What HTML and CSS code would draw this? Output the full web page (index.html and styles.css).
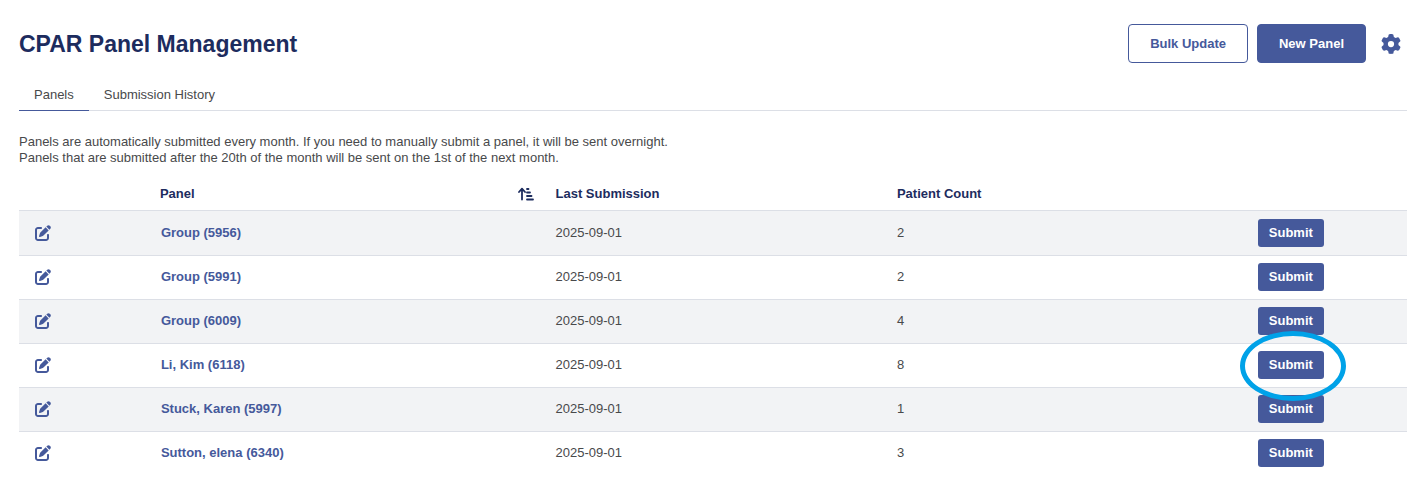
FILE: index.html
```html
<!DOCTYPE html>
<html lang="en">
<head>
<meta charset="utf-8">
<title>CPAR Panel Management</title>
<link rel="stylesheet" href="styles.css">
</head>
<body>
<svg class="sprite" aria-hidden="true">
  <symbol id="edit" viewBox="0 0 512 512"><path d="M471.600 21.700c-21.900-21.900-57.300-21.900-79.200 0L362.300 51.700l97.900 97.900 30.100-30.100c21.900-21.900 21.900-57.300 0-79.200L471.600 21.700zm-299.200 220c-6.100 6.100-10.800 13.600-13.500 21.900l-29.600 88.800c-2.900 8.600-.6 18.100 5.800 24.600s15.900 8.700 24.600 5.800l88.800-29.600c8.200-2.700 15.700-7.400 21.900-13.500L437.700 172.300 339.700 74.300 172.400 241.700zM96 64C43 64 0 107 0 160V416c0 53 43 96 96 96H352c53 0 96-43 96-96V320c0-17.700-14.300-32-32-32s-32 14.300-32 32v96c0 17.700-14.300 32-32 32H96c-17.700 0-32-14.300-32-32V160c0-17.700 14.300-32 32-32h96c17.700 0 32-14.300 32-32s-14.300-32-32-32H96z"/></symbol>
</svg>
<main class="page">
  <header class="header">
    <h1 class="title">CPAR Panel Management</h1>
    <div class="actions">
      <button class="button button-outline" type="button">Bulk Update</button>
      <button class="button" type="button">New Panel</button>
      <button class="icon-button settings" type="button" aria-label="Settings">
        <svg class="gear" viewBox="0 0 512 512"><path d="M495.900 166.600c3.200 8.700 .5 18.400-6.400 24.600l-43.300 39.400c1.100 8.300 1.700 16.800 1.700 25.400s-.6 17.100-1.700 25.400l43.300 39.400c6.900 6.200 9.600 15.900 6.400 24.600c-4.400 11.900-9.700 23.300-15.800 34.300l-4.700 8.100c-6.600 11-14 21.400-22.100 31.200c-5.900 7.200-15.700 9.600-24.500 6.800l-55.700-17.700c-13.400 10.300-28.200 18.900-44 25.400l-12.500 57.100c-2 9.100-9 16.300-18.200 17.800c-13.800 2.300-28 3.500-42.500 3.500s-28.700-1.200-42.500-3.500c-9.200-1.500-16.200-8.700-18.200-17.800l-12.500-57.100c-15.800-6.500-30.600-15.100-44-25.400L83.100 425.900c-8.800 2.800-18.600 .3-24.500-6.800c-8.100-9.800-15.500-20.200-22.100-31.200l-4.700-8.100c-6.100-11-11.400-22.400-15.800-34.300c-3.200-8.700-.5-18.400 6.400-24.600l43.300-39.400C64.600 273.100 64 264.600 64 256s.6-17.100 1.700-25.400L22.400 191.200c-6.900-6.200-9.600-15.900-6.400-24.600c4.400-11.900 9.700-23.300 15.800-34.300l4.700-8.100c6.600-11 14-21.400 22.100-31.200c5.900-7.200 15.700-9.600 24.500-6.800l55.700 17.700c13.400-10.300 28.200-18.900 44-25.400l12.500-57.100c2-9.100 9-16.300 18.200-17.800C227.300 1.200 241.500 0 256 0s28.700 1.200 42.500 3.500c9.200 1.500 16.200 8.700 18.200 17.800l12.500 57.100c15.800 6.500 30.600 15.100 44 25.400l55.700-17.700c8.800-2.800 18.600-.3 24.500 6.800c8.100 9.800 15.500 20.200 22.100 31.200l4.700 8.100c6.100 11 11.400 22.400 15.800 34.300zM256 336a80 80 0 1 0 0-160 80 80 0 1 0 0 160z"/></svg>
      </button>
    </div>
  </header>
  <nav class="tabs">
    <a class="tab tab-active" href="#panels">Panels</a>
    <a class="tab" href="#history">Submission History</a>
  </nav>
  <p class="note">Panels are automatically submitted every month. If you need to manually submit a panel, it will be sent overnight.<br>Panels that are submitted after the 20th of the month will be sent on the 1st of the next month.</p>
  <table class="table">
    <colgroup><col class="col-edit"><col class="col-panel"><col class="col-date"><col class="col-count"><col></colgroup>
    <thead>
      <tr>
        <th></th>
        <th class="sortable"><div class="sort-head"><span>Panel</span><svg class="sort" viewBox="0 0 16 14"><path d="M4 12.500V2M1 5l3-3.300L7 5M9 2h1.500M9 5.500h3M9 9h4.500M9 12.500h6"/></svg></div></th>
        <th>Last Submission</th>
        <th>Patient Count</th>
        <th></th>
      </tr>
    </thead>
    <tbody>
      <tr>
        <td><button class="icon-button" type="button" aria-label="Edit Group (5956)"><svg class="edit"><use href="#edit"/></svg></button></td>
        <td><a class="link" href="#5956">Group (5956)</a></td><td>2025-09-01</td><td>2</td>
        <td><button class="submit" type="button">Submit</button></td>
      </tr>
      <tr>
        <td><button class="icon-button" type="button" aria-label="Edit Group (5991)"><svg class="edit"><use href="#edit"/></svg></button></td>
        <td><a class="link" href="#5991">Group (5991)</a></td><td>2025-09-01</td><td>2</td>
        <td><button class="submit" type="button">Submit</button></td>
      </tr>
      <tr>
        <td><button class="icon-button" type="button" aria-label="Edit Group (6009)"><svg class="edit"><use href="#edit"/></svg></button></td>
        <td><a class="link" href="#6009">Group (6009)</a></td><td>2025-09-01</td><td>4</td>
        <td><button class="submit" type="button">Submit</button></td>
      </tr>
      <tr>
        <td><button class="icon-button" type="button" aria-label="Edit Li, Kim (6118)"><svg class="edit"><use href="#edit"/></svg></button></td>
        <td><a class="link" href="#6118">Li, Kim (6118)</a></td><td>2025-09-01</td><td>8</td>
        <td><div class="marked"><button class="submit" type="button">Submit</button><span class="ring"></span></div></td>
      </tr>
      <tr>
        <td><button class="icon-button" type="button" aria-label="Edit Stuck, Karen (5997)"><svg class="edit"><use href="#edit"/></svg></button></td>
        <td><a class="link" href="#5997">Stuck, Karen (5997)</a></td><td>2025-09-01</td><td>1</td>
        <td><button class="submit" type="button">Submit</button></td>
      </tr>
      <tr>
        <td><button class="icon-button" type="button" aria-label="Edit Sutton, elena (6340)"><svg class="edit"><use href="#edit"/></svg></button></td>
        <td><a class="link" href="#6340">Sutton, elena (6340)</a></td><td>2025-09-01</td><td>3</td>
        <td><button class="submit" type="button">Submit</button></td>
      </tr>
    </tbody>
  </table>
</main>
</body>
</html>
```
FILE: styles.css
```css
:root {
  --blue: #45599b;
  --navy: #1d2c5e;
  --text: #48494b;
  --line: #dcdfe6;
}
* { box-sizing: border-box; }
body {
  margin: 0;
  background: #fff;
  color: var(--text);
  font: 13px/16px "Liberation Sans", Arial, sans-serif;
}
button { font: inherit; cursor: pointer; }
.sprite { position: absolute; width: 0; height: 0; }
.page { padding: 24px 14px 20px 19px; }
.header { display: flex; justify-content: space-between; align-items: center; }
.title { margin: 0; color: var(--navy); font-size: 23px; line-height: 28px; }
.actions { display: flex; align-items: center; gap: 9px; }
.button {
  height: 39px;
  padding: 0 21px;
  border: 1px solid var(--blue);
  border-radius: 4px;
  background: var(--blue);
  color: #fff;
  font-weight: bold;
}
.button-outline { background: #fff; color: var(--blue); }
.icon-button {
  display: block;
  padding: 0;
  border: 0;
  background: none;
  color: var(--blue);
}
.settings { padding: 0 6px; }
.gear { display: block; width: 20px; height: 20px; fill: currentColor; }
.tabs { display: flex; margin-top: 16px; border-bottom: 1px solid var(--line); }
.tab {
  margin-bottom: -1px;
  padding: 8px 15px 7px;
  border-bottom: 1px solid transparent;
  color: var(--text);
  text-decoration: none;
}
.tab-active { border-bottom-color: var(--blue); }
.note { margin: 23px 0 12px; }
.table { width: 100%; table-layout: fixed; border-collapse: collapse; }
.col-edit { width: 9%; }
.col-panel { width: 28.5%; }
.col-date { width: 24.6%; }
.col-count { width: 26%; }
th {
  height: 32px;
  padding: 0 16px;
  color: var(--navy);
  text-align: left;
}
td { height: 44px; padding: 0 16px; border-top: 1px solid var(--line); }
tbody tr:first-child td { height: 45px; }
tbody tr:nth-child(odd) { background: #f2f3f5; }
.sortable { padding-right: 5px; }
.sort-head { display: flex; justify-content: space-between; align-items: center; }
.sort {
  width: 16px;
  height: 14px;
  fill: none;
  stroke: currentColor;
  stroke-width: 1.8;
  stroke-linecap: round;
  stroke-linejoin: round;
}
.edit { display: block; width: 16px; height: 16px; fill: currentColor; }
.link { padding: 0 1px; color: var(--blue); font-weight: bold; text-decoration: none; }
.submit {
  display: block;
  height: 28px;
  padding: 0 11px;
  border: 0;
  border-radius: 3px;
  background: var(--blue);
  color: #fff;
  font-weight: bold;
}
.marked { position: relative; width: fit-content; }
.ring {
  position: absolute;
  inset: -20px -22px -22px -18px;
  border: 5px solid #00a2e8;
  border-radius: 50%;
  pointer-events: none;
}
```
